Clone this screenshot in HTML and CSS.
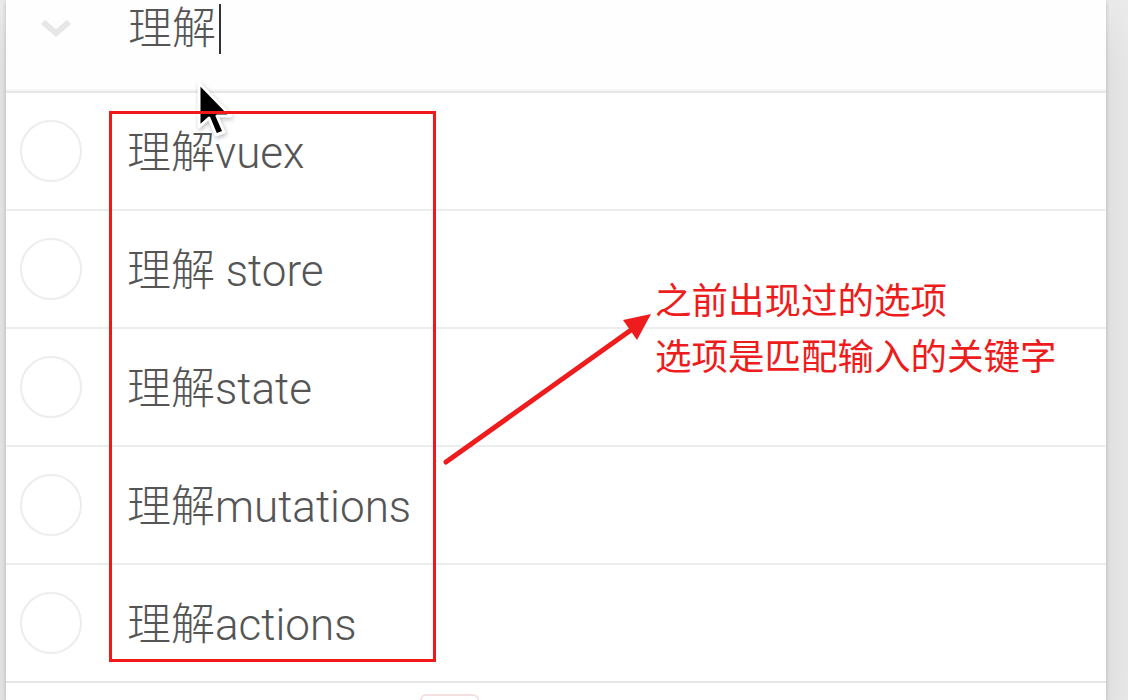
FILE: index.html
```html
<!DOCTYPE html>
<html lang="zh">
<head>
<meta charset="utf-8">
<link rel="stylesheet" href="styles.css">
</head>
<body>
<div class="page">
  <section class="app">
    <header class="header">
      <div class="toggle-all">
        <svg width="32" height="20" viewBox="0 0 32 20"><polyline points="3,4 16,15 29,4" fill="none" stroke="#e6e6e6" stroke-width="6"/></svg>
      </div>
      <div class="new-todo">理解<span class="caret"></span></div>
    </header>
    <ul class="list">
      <li class="item"><span class="check"></span><span class="label">理解vuex</span></li>
      <li class="item"><span class="check"></span><span class="label">理解 store</span></li>
      <li class="item"><span class="check"></span><span class="label">理解state</span></li>
      <li class="item"><span class="check"></span><span class="label">理解mutations</span></li>
      <li class="item"><span class="check"></span><span class="label">理解actions</span></li>
    </ul>
    <footer class="footer"><span class="pill"></span></footer>
  </section>

  <svg class="pointer" width="44" height="62" viewBox="0 0 44 62">
    <path d="M4,3 L4,47 L14,38 L21,55 L29,52 L22,36 L36,36 Z" fill="#000" stroke="#fff" stroke-width="3" stroke-linejoin="round" style="filter: drop-shadow(1px 2px 2px rgba(0,0,0,0.25))"/>
  </svg>
  <div class="highlight"></div>
  <svg class="arrow" width="230" height="170" viewBox="0 0 230 170">
    <line x1="5" y1="152" x2="190" y2="20" stroke="#ee1c1c" stroke-width="5" stroke-linecap="round"/>
    <polygon points="210,4 182,10 196,30" fill="#ee1c1c"/>
  </svg>
  <div class="note">
    <p>之前出现过的选项</p>
    <p>选项是匹配输入的关键字</p>
  </div>
</div>
</body>
</html>
```

FILE: styles.css
```css
html, body {
  margin: 0;
  padding: 0;
  height: 100%;
  overflow: hidden;
  background: #ebebeb;
}

.page {
  position: relative;
  height: 700px;
  padding: 0 22px 0 6px;
  font-family: "Helvetica Neue", Roboto, "Noto Sans CJK SC", sans-serif;
}

.app {
  background: #fff;
  height: 700px;
  box-shadow: 0 2px 4px rgba(0,0,0,0.2), 0 25px 50px rgba(0,0,0,0.1);
}

.header {
  height: 91px;
  display: flex;
  align-items: flex-start;
  background: #fefefe;
  box-shadow: inset 0 -2px 1px rgba(0,0,0,0.03);
  border-bottom: 2px solid #e6e6e6;
}

.toggle-all {
  width: 122px;
  padding: 18px 0 0 34px;
  box-sizing: border-box;
}

.new-todo {
  font-size: 44px;
  font-weight: 300;
  color: #555;
  line-height: 50px;
  padding-top: 4px;
  display: flex;
  align-items: center;
}

.caret {
  display: inline-block;
  width: 2px;
  height: 50px;
  background: #333;
  margin-left: 3px;
}

.list {
  list-style: none;
  margin: 0;
  padding: 0;
}

.item {
  height: 116px;
  display: flex;
  align-items: center;
  border-bottom: 2px solid #ededed;
}

.item:last-child {
  border-bottom-color: #e6e6e6;
}

.check {
  width: 58px;
  height: 58px;
  border: 2px solid #ededed;
  border-radius: 50%;
  margin-left: 14px;
  flex: none;
}

.label {
  margin-left: 45px;
  font-size: 44px;
  font-weight: 300;
  color: #555;
  line-height: 1;
  padding-top: 4px;
}

.footer {
  height: 20px;
  position: relative;
}

.pill {
  position: absolute;
  left: 414px;
  top: 11px;
  width: 55px;
  height: 20px;
  border: 2px solid rgba(175, 47, 47, 0.15);
  border-radius: 6px;
}

.pointer {
  position: absolute;
  left: 195px;
  top: 80px;
}

.highlight {
  position: absolute;
  left: 109px;
  top: 111px;
  width: 321px;
  height: 545px;
  border: 3px solid #f01818;
}

.arrow {
  position: absolute;
  left: 441px;
  top: 310px;
}

.note {
  position: absolute;
  left: 655px;
  top: 271px;
  color: #ee1c1c;
  font-family: "Noto Sans CJK SC", sans-serif;
  font-size: 36.5px;
  line-height: 56px;
}

.note p {
  margin: 0;
}
```
